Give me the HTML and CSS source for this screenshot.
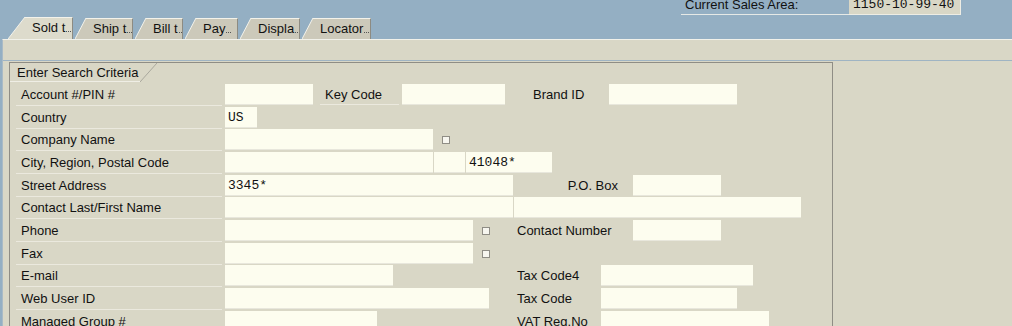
FILE: index.html
```html
<!DOCTYPE html>
<html lang="en">

<head>
    <meta charset="UTF-8">
    <meta name="viewport" content="width=device-width, initial-scale=1.0">
    <title>Customer Search</title>
    <link rel="stylesheet" href="styles.css">
</head>

<body>
    <div class="header">
        <div class="sales-area">
            <span class="sales-label">Current Sales Area:</span>
            <span class="sales-value">1150-10-99-40</span>
        </div>
        <div class="tabs">
            <div class="tab active">
                <svg class="slant" viewBox="0 0 17 22" preserveAspectRatio="none"><polygon points="0,22 17,0 17,22"/><line x1="0" y1="22" x2="17" y2="0"/></svg>
                <div class="tab-label t-sold">Sold t<span class="more"></span></div>
            </div>
            <div class="tab">
                <svg class="slant" viewBox="0 0 11 21" preserveAspectRatio="none"><polygon points="0,21 11,0 11,21"/><line x1="0" y1="21" x2="11" y2="0"/></svg>
                <div class="tab-label t-ship">Ship t<span class="more"></span></div>
            </div>
            <div class="tab">
                <svg class="slant" viewBox="0 0 11 21" preserveAspectRatio="none"><polygon points="0,21 11,0 11,21"/><line x1="0" y1="21" x2="11" y2="0"/></svg>
                <div class="tab-label t-bill">Bill t<span class="more"></span></div>
            </div>
            <div class="tab">
                <svg class="slant" viewBox="0 0 11 21" preserveAspectRatio="none"><polygon points="0,21 11,0 11,21"/><line x1="0" y1="21" x2="11" y2="0"/></svg>
                <div class="tab-label t-pay">Pay<span class="more"></span></div>
            </div>
            <div class="tab">
                <svg class="slant" viewBox="0 0 11 21" preserveAspectRatio="none"><polygon points="0,21 11,0 11,21"/><line x1="0" y1="21" x2="11" y2="0"/></svg>
                <div class="tab-label t-disp">Displa<span class="more"></span></div>
            </div>
            <div class="tab">
                <svg class="slant" viewBox="0 0 11 21" preserveAspectRatio="none"><polygon points="0,21 11,0 11,21"/><line x1="0" y1="21" x2="11" y2="0"/></svg>
                <div class="tab-label t-loc">Locator<span class="more"></span></div>
            </div>
        </div>
    </div>

    <div class="panel">
        <div class="toolbar"></div>
        <div class="subscreen">
            <div class="group">
                <div class="group-title">
                    <span class="group-text">Enter Search Criteria</span>
                    <svg class="title-slant" viewBox="0 0 17 19" preserveAspectRatio="none"><polygon points="0,19 17,0 0,0"/><line x1="0" y1="19" x2="17" y2="0"/></svg>
                </div>

                <div class="form">
                    <div class="row">
                        <div class="lbl">Account #/PIN #</div>
                        <div class="main wide">
                            <div class="fld w88"></div>
                            <div class="sublbl keycode">Key Code</div>
                            <div class="fld w103 ml3"></div>
                            <div class="sublbl brand">Brand ID</div>
                            <div class="fld w128"></div>
                        </div>
                    </div>
                    <div class="row">
                        <div class="lbl">Country</div>
                        <div class="main">
                            <div class="fld w32">US</div>
                        </div>
                    </div>
                    <div class="row">
                        <div class="lbl">Company Name</div>
                        <div class="main">
                            <div class="fld w208"></div>
                            <span class="chk"></span>
                        </div>
                    </div>
                    <div class="row">
                        <div class="lbl">City, Region, Postal Code</div>
                        <div class="main wide">
                            <div class="fld w208"></div>
                            <div class="fld w31 ml1"></div>
                            <div class="fld w86 ml1">41048*</div>
                        </div>
                    </div>
                    <div class="row">
                        <div class="lbl">Street Address</div>
                        <div class="main wide">
                            <div class="fld w288">3345*</div>
                            <div class="sublbl pobox">P.O. Box</div>
                            <div class="fld w88"></div>
                        </div>
                    </div>
                    <div class="row">
                        <div class="lbl">Contact Last/First Name</div>
                        <div class="main wide">
                            <div class="fld w288"></div>
                            <div class="fld w287 ml1"></div>
                        </div>
                    </div>
                    <div class="row">
                        <div class="lbl">Phone</div>
                        <div class="main">
                            <div class="fld w248"></div>
                            <span class="chk"></span>
                        </div>
                        <div class="right">
                            <div class="rlbl w116">Contact Number</div>
                            <div class="fld w88"></div>
                        </div>
                    </div>
                    <div class="row">
                        <div class="lbl">Fax</div>
                        <div class="main">
                            <div class="fld w248"></div>
                            <span class="chk"></span>
                        </div>
                    </div>
                    <div class="row">
                        <div class="lbl">E-mail</div>
                        <div class="main">
                            <div class="fld w168"></div>
                        </div>
                        <div class="right">
                            <div class="rlbl w84">Tax Code4</div>
                            <div class="fld w152"></div>
                        </div>
                    </div>
                    <div class="row">
                        <div class="lbl">Web User ID</div>
                        <div class="main">
                            <div class="fld w264"></div>
                        </div>
                        <div class="right">
                            <div class="rlbl w84">Tax Code</div>
                            <div class="fld w136"></div>
                        </div>
                    </div>
                    <div class="row">
                        <div class="lbl">Managed Group #</div>
                        <div class="main">
                            <div class="fld w152"></div>
                        </div>
                        <div class="right">
                            <div class="rlbl w84">VAT Reg.No</div>
                            <div class="fld w168"></div>
                        </div>
                    </div>
                </div>
            </div>
        </div>
    </div>
</body>
</html>
```

FILE: styles.css
```css
body {
    margin: 0;
    height: 326px;
    overflow: hidden;
    background-color: #94afc3;
    font-family: "Liberation Sans", Arial, sans-serif;
    font-size: 13px;
    color: #111;
}

/* header: sales area + tab strip */
.header {
    height: 39px;
    display: flex;
    flex-direction: column;
    justify-content: space-between;
}

.sales-area {
    display: flex;
    justify-content: flex-end;
    padding-right: 51px;
    margin-top: -5px;
    height: 20px;
    line-height: 19px;
}

.sales-label {
    width: 168px;
    box-sizing: border-box;
    padding-left: 4px;
    border-bottom: 1px solid #e6e9e6;
}

.sales-value {
    width: 112px;
    box-sizing: border-box;
    padding-left: 4px;
    background-color: #d9d7c6;
    border-right: 1px solid #eeede4;
    border-bottom: 1px solid #eeede4;
    font-family: "Liberation Mono", monospace;
}

.tabs {
    display: flex;
    align-items: flex-end;
    gap: 2px;
    padding-left: 8px;
    height: 22px;
}

.tab {
    display: flex;
}

.slant {
    display: block;
    width: 11px;
    height: 21px;
}

.slant polygon {
    fill: #ccc9ba;
}

.slant line {
    stroke: #f3f2ea;
    stroke-width: 1;
}

.tab-label {
    height: 21px;
    box-sizing: border-box;
    padding-left: 7px;
    background-color: #ccc9ba;
    border-top: 1px solid #f3f2ea;
    border-right: 1px solid #8d8b82;
    line-height: 19px;
    white-space: nowrap;
    overflow: hidden;
}

.tab.active .slant {
    width: 17px;
    height: 22px;
}

.tab.active .slant polygon,
.tab.active .tab-label {
    fill: #dddbcc;
    background-color: #dddbcc;
}

.tab.active .tab-label {
    height: 22px;
    line-height: 20px;
}

.t-sold { width: 48px; }
.t-ship { width: 47px; }
.t-bill { width: 37px; }
.t-pay { width: 42px; }
.t-disp { width: 49px; }
.t-loc { width: 58px; }

.more {
    display: inline-block;
    width: 5px;
    height: 1px;
    margin-left: 1px;
    border-bottom: 1px dotted #555;
}

/* main panel */
.panel {
    margin-left: 2px;
    height: 287px;
    background-color: #d9d7c6;
    border-left: 1px solid #a9bac6;
    border-top: 1px solid #f1f1ea;
}

.toolbar {
    height: 20px;
}

.subscreen {
    border-top: 1px solid #9fb4c3;
}

.group {
    margin: 1px 0 0 6px;
    width: 824px;
    height: 300px;
    box-sizing: border-box;
    border: 1px solid #8f8d85;
    border-bottom: none;
}

.group-title {
    display: flex;
}

.group-text {
    width: 130px;
    box-sizing: border-box;
    padding: 2px 0 0 7px;
    line-height: 16px;
    border-bottom: 1px solid #efeee5;
}

.title-slant {
    display: block;
    width: 17px;
    height: 19px;
}

.title-slant polygon {
    fill: #d9d7c6;
}

.title-slant line {
    stroke: #aaa89e;
    stroke-width: 1;
}

.form {
    margin: 2px 0 0 6px;
}

.row {
    display: grid;
    grid-template-columns: 209px 292px 1fr;
    height: 22.67px;
}

.lbl {
    width: 206px;
    height: 22px;
    box-sizing: border-box;
    padding-left: 5px;
    line-height: 21px;
    border-bottom: 1px solid #ebe9de;
}

.main,
.right {
    display: flex;
    align-items: flex-start;
}

.main.wide {
    grid-column: 2 / span 2;
}

.fld {
    height: 21px;
    box-sizing: border-box;
    padding-left: 3px;
    background-color: #fdfdef;
    border-bottom: 1px solid #e8e7dc;
    font-family: "Liberation Mono", monospace;
    font-size: 13px;
    line-height: 21px;
    color: #111;
}

.sublbl,
.rlbl {
    height: 21px;
    box-sizing: border-box;
    line-height: 21px;
    white-space: nowrap;
}

.keycode {
    width: 79px;
    margin-left: 7px;
    padding-left: 5px;
    border-bottom: 1px solid #ebe9de;
}

.brand {
    width: 104px;
    padding-left: 28px;
}

.pobox {
    width: 120px;
    padding-right: 15px;
    text-align: right;
}

.chk {
    width: 6px;
    height: 6px;
    margin: 7px 0 0 9px;
    background-color: #f7f6ef;
    border: 1px solid #8f8d85;
}

.ml1 { margin-left: 1px; }
.ml3 { margin-left: 3px; }

.w31 { width: 31px; }
.w32 { width: 32px; }
.w84 { width: 84px; }
.w86 { width: 86px; }
.w88 { width: 88px; }
.w103 { width: 103px; }
.w116 { width: 116px; }
.w128 { width: 128px; }
.w136 { width: 136px; }
.w152 { width: 152px; }
.w168 { width: 168px; }
.w208 { width: 208px; }
.w248 { width: 248px; }
.w264 { width: 264px; }
.w287 { width: 287px; }
.w288 { width: 288px; }
```
